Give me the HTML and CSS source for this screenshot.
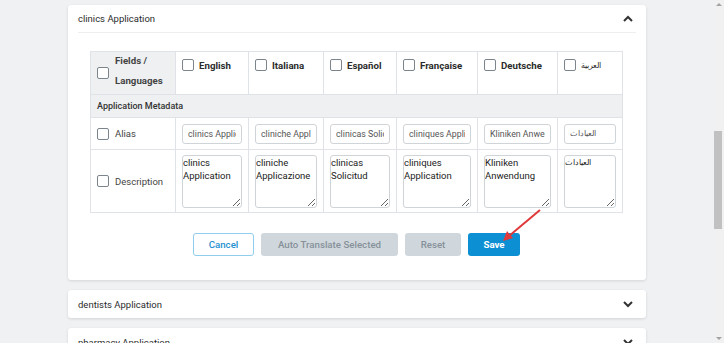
FILE: index.html
```html
<!DOCTYPE html>
<html lang="en">
<head>
  <meta charset="UTF-8" />
  <title>Application Translations</title>
  <link rel="stylesheet" href="styles.css">
</head>
<body>
<div class="page">
  <div class="card open">
    <div class="card-head">
      <span>clinics Application</span>
      <svg class="chev" width="10" height="7" viewBox="0 0 10 7"><path d="M1 6 L5 2 L9 6" fill="none" stroke="#333" stroke-width="2"/></svg>
    </div>
    <div class="card-body">
      <table class="grid">
        <colgroup>
          <col style="width:85px"><col style="width:73px"><col style="width:75px"><col style="width:73px"><col style="width:81px"><col style="width:80px"><col style="width:65px">
        </colgroup>
        <tr class="lang-row">
          <th class="first"><div class="fld"><span class="cb"></span><span>Fields /<br>Languages</span></div></th>
          <th><div class="lang"><span class="cb"></span>English</div></th>
          <th><div class="lang"><span class="cb"></span>Italiana</div></th>
          <th><div class="lang"><span class="cb"></span>Español</div></th>
          <th><div class="lang"><span class="cb"></span>Française</div></th>
          <th><div class="lang"><span class="cb"></span>Deutsche</div></th>
          <th><div class="lang"><span class="cb"></span><span class="ar">العربية</span></div></th>
        </tr>
        <tr class="group-row">
          <td colspan="7">Application Metadata</td>
        </tr>
        <tr class="alias-row">
          <td><div class="fld"><span class="cb"></span>Alias</div></td>
          <td><input type="text" value="clinics Application"></td>
          <td><input type="text" value="cliniche Applicazione"></td>
          <td><input type="text" value="clinicas Solicitud"></td>
          <td><input type="text" value="cliniques Application"></td>
          <td><input type="text" value="Kliniken Anwendung"></td>
          <td><input type="text" class="ar" value="العيادات"></td>
        </tr>
        <tr class="desc-row">
          <td><div class="fld"><span class="cb"></span>Description</div></td>
          <td><textarea>clinics Application</textarea></td>
          <td><textarea>cliniche Applicazione</textarea></td>
          <td><textarea>clinicas Solicitud</textarea></td>
          <td><textarea>cliniques Application</textarea></td>
          <td><textarea>Kliniken Anwendung</textarea></td>
          <td><textarea class="ar">العيادات</textarea></td>
        </tr>
      </table>
      <div class="actions">
        <button class="btn btn-outline">Cancel</button>
        <button class="btn btn-grey btn-auto">Auto Translate Selected</button>
        <button class="btn btn-grey btn-reset">Reset</button>
        <button class="btn btn-save">Save</button>
      </div>
    </div>
    <svg class="pointer" width="44" height="36" viewBox="0 0 44 36">
      <line x1="40" y1="3" x2="9" y2="29" stroke="#e0393b" stroke-width="2"/>
      <path d="M3 34 L7 24 L13 31 Z" fill="#e0393b"/>
    </svg>
  </div>

  <div class="card">
    <div class="card-head">
      <span>dentists Application</span>
      <svg class="chev" width="10" height="7" viewBox="0 0 10 7"><path d="M1 1 L5 5 L9 1" fill="none" stroke="#333" stroke-width="2"/></svg>
    </div>
  </div>

  <div class="card">
    <div class="card-head">
      <span>pharmacy Application</span>
      <svg class="chev" width="10" height="7" viewBox="0 0 10 7"><path d="M1 1 L5 5 L9 1" fill="none" stroke="#333" stroke-width="2"/></svg>
    </div>
  </div>
</div>
<div class="scrollbar">
  <span class="arrow up"></span>
  <div class="track"><div class="thumb"></div></div>
  <span class="arrow down"></span>
</div>
</body>
</html>
```
FILE: styles.css
```css
* { margin: 0; padding: 0; box-sizing: border-box; }
body {
  font-family: Roboto, "Noto Sans", sans-serif;
  background: #f0f1f3;
  color: #333;
  height: 343px;
  overflow: hidden;
  display: flex;
}
.page {
  flex: 1;
  padding: 5px 68px 0;
  display: flex;
  flex-direction: column;
  gap: 10px;
}
.card {
  background: #fff;
  border-radius: 3px;
  box-shadow: 0 1px 3px rgba(0,0,0,0.12);
  position: relative;
  flex-shrink: 0;
}
.card-head {
  height: 28px;
  margin: 0 10px;
  display: flex;
  align-items: center;
  justify-content: space-between;
  font-size: 9.5px;
  color: #2b2b2b;
}
.card-head .chev { margin-right: 3px; }
.open .card-head { border-bottom: 1px solid #eceef0; }
.card-body {
  padding: 18px 23px 24px 22px;
}
.grid {
  width: 532px;
  table-layout: fixed;
  border-collapse: collapse;
  font-size: 9.5px;
}
.grid th, .grid td {
  border: 1px solid #dfe2e6;
  padding: 0 6px;
  text-align: left;
  vertical-align: middle;
}
.lang-row { height: 43px; }
.lang-row th {
  vertical-align: top;
  padding-top: 7px;
  font-weight: 700;
  font-size: 9.7px;
  color: #2b2b2b;
}
.lang-row th.first {
  background: #eef0f2;
  vertical-align: middle;
  padding-top: 0;
  line-height: 20px;
}
.first .fld { margin-top: -5px; }
.lang { display: flex; align-items: center; gap: 5px; height: 12px; }
.ar { font-weight: 400; font-size: 8px; }
.fld { display: flex; align-items: center; gap: 6px; color: #444; }
.first .fld .cb { margin-top: 5px; }
.cb {
  width: 12px;
  height: 12px;
  border: 1px solid #7c848c;
  border-radius: 2px;
  background: #fff;
  flex-shrink: 0;
}
.group-row { height: 23px; }
.group-row td {
  background: #eef0f2;
  font-weight: 500;
  font-size: 9px;
  color: #333;
}
.alias-row { height: 32px; }
.desc-row { height: 63px; }
input[type="text"] {
  width: 100%;
  height: 20px;
  border: 1px solid #cfd4d9;
  border-radius: 3px;
  padding: 0 5px;
  font-family: Roboto, "Noto Sans", sans-serif;
  font-size: 8.8px;
  color: #555;
  outline: none;
}
textarea {
  display: block;
  width: 100%;
  height: 53px;
  border: 1px solid #cfd4d9;
  border-radius: 3px;
  padding: 0;
  font-family: Roboto, "Noto Sans", sans-serif;
  font-size: 9.5px;
  line-height: 13px;
  color: #222;
  outline: none;
  overflow: hidden;
}
input.ar, textarea.ar { font-size: 8px; }
.actions {
  margin-top: 20px;
  display: flex;
  justify-content: center;
  gap: 7px;
}
.btn {
  height: 23px;
  border-radius: 3px;
  border: 1px solid transparent;
  font-family: Roboto, "Noto Sans", sans-serif;
  font-size: 9.7px;
  font-weight: 500;
  cursor: pointer;
}
.btn-outline {
  width: 61px;
  background: #fff;
  border-color: #8fcdec;
  color: #2590cf;
}
.btn-grey {
  background: #d0d7dc;
  color: #86919a;
}
.btn-auto { width: 137px; }
.btn-reset { width: 56px; }
.btn-save {
  width: 52px;
  background: #0d90d3;
  color: #fff;
  font-weight: 700;
}
.pointer {
  position: absolute;
  left: 432px;
  top: 202px;
}
.scrollbar {
  width: 11px;
  background: #f1f1f1;
  display: flex;
  flex-direction: column;
  align-items: center;
}
.track { flex: 1; width: 100%; position: relative; }
.thumb {
  position: absolute;
  left: 0;
  width: 8px;
  top: 122px;
  height: 98px;
  background: #c1c1c1;
}
.arrow {
  width: 0;
  height: 0;
  border-left: 3px solid transparent;
  border-right: 3px solid transparent;
  margin: 3px 0;
}
.arrow.up { border-bottom: 3px solid #a3a3a3; }
.arrow.down { border-top: 3px solid #a3a3a3; }
```
